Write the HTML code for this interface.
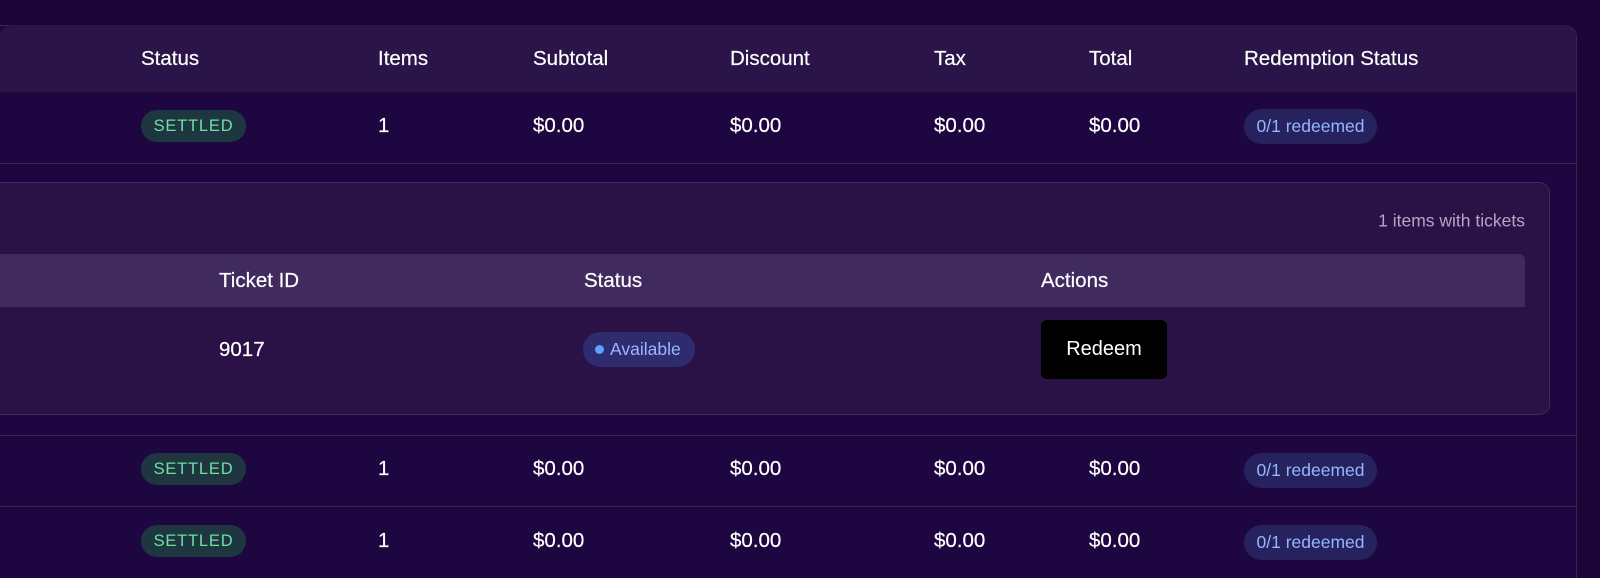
<!DOCTYPE html>
<html><head><meta charset="utf-8"><style>
*{margin:0;padding:0;box-sizing:border-box}
html,body{width:1600px;height:578px;overflow:hidden;background:#1c0638}
#w{width:1600px;height:578px;font-family:"Liberation Sans",sans-serif;color:#fff;position:relative;overflow:hidden;background:#1c0638}
.a{position:absolute;white-space:nowrap}
.card{position:absolute;left:-20px;top:25px;width:1597px;height:553px;border:1px solid #3a2456;border-bottom:none;border-radius:12px 12px 0 0;background:#1e0740}
.hdr{position:absolute;left:0;top:25px;width:1576px;height:67px;background:#2a1448;border-radius:12px 12px 0 0}
.t{font-size:20.5px;transform:translateY(-50%);-webkit-text-stroke:0.2px #fff}
.settled{position:absolute;left:141px;width:105px;height:32px;border-radius:16px;background:#1e3640;color:#6fe0a0;font-size:16.5px;letter-spacing:.8px;line-height:32px;text-align:center}
.red{position:absolute;left:1244px;width:133px;height:35px;border-radius:18px;background:#26225e;color:#95b6ff;font-size:17.5px;line-height:35px;text-align:center}
.line{position:absolute;left:0;width:1576px;height:1px;background:#3a2456}
</style></head><body><div id="w">
<div class="card"></div>
<div class="hdr"></div>
<div class="a t" style="left:141px;top:59px">Status</div>
<div class="a t" style="left:378px;top:59px">Items</div>
<div class="a t" style="left:533px;top:59px">Subtotal</div>
<div class="a t" style="left:730px;top:59px">Discount</div>
<div class="a t" style="left:934px;top:59px">Tax</div>
<div class="a t" style="left:1089px;top:59px">Total</div>
<div class="a t" style="left:1244px;top:59px">Redemption Status</div>

<div class="settled" style="top:110px">SETTLED</div>
<div class="a t" style="left:378px;top:126px">1</div>
<div class="a t" style="left:533px;top:126px">$0.00</div>
<div class="a t" style="left:730px;top:126px">$0.00</div>
<div class="a t" style="left:934px;top:126px">$0.00</div>
<div class="a t" style="left:1089px;top:126px">$0.00</div>
<div class="red" style="top:109px">0/1 redeemed</div>
<div class="line" style="top:163px"></div>

<div style="position:absolute;left:-20px;top:182px;width:1570px;height:233px;border:1px solid #3e2a5c;border-radius:11px;background:#2a1246"></div>
<div class="a t" style="right:75px;top:221px;font-size:17.5px;color:#b4a6c8;-webkit-text-stroke:0">1 items with tickets</div>
<div style="position:absolute;left:0;top:254px;width:1525px;height:53px;background:#412a5e;border-radius:0 6px 0 0"></div>
<div class="a t" style="left:219px;top:281px">Ticket ID</div>
<div class="a t" style="left:584px;top:281px">Status</div>
<div class="a t" style="left:1041px;top:281px">Actions</div>
<div class="a t" style="left:219px;top:350px">9017</div>
<div style="position:absolute;left:583px;top:332px;width:112px;height:35px;border-radius:18px;background:#2e2c6e;color:#9ab8ff;font-size:17.5px;line-height:35px;padding-left:27px">Available<span style="position:absolute;left:12px;top:13px;width:9px;height:9px;border-radius:50%;background:#5fa0ff"></span></div>
<div style="position:absolute;left:1041px;top:320px;width:126px;height:59px;border-radius:6px;background:#000;color:#fff;font-size:20px;line-height:59px;text-align:center">Redeem</div>

<div class="line" style="top:435px"></div>
<div class="settled" style="top:453px">SETTLED</div>
<div class="a t" style="left:378px;top:469px">1</div>
<div class="a t" style="left:533px;top:469px">$0.00</div>
<div class="a t" style="left:730px;top:469px">$0.00</div>
<div class="a t" style="left:934px;top:469px">$0.00</div>
<div class="a t" style="left:1089px;top:469px">$0.00</div>
<div class="red" style="top:453px">0/1 redeemed</div>
<div class="line" style="top:506px"></div>
<div class="settled" style="top:525px">SETTLED</div>
<div class="a t" style="left:378px;top:541px">1</div>
<div class="a t" style="left:533px;top:541px">$0.00</div>
<div class="a t" style="left:730px;top:541px">$0.00</div>
<div class="a t" style="left:934px;top:541px">$0.00</div>
<div class="a t" style="left:1089px;top:541px">$0.00</div>
<div class="red" style="top:525px">0/1 redeemed</div>
</div></body></html>
